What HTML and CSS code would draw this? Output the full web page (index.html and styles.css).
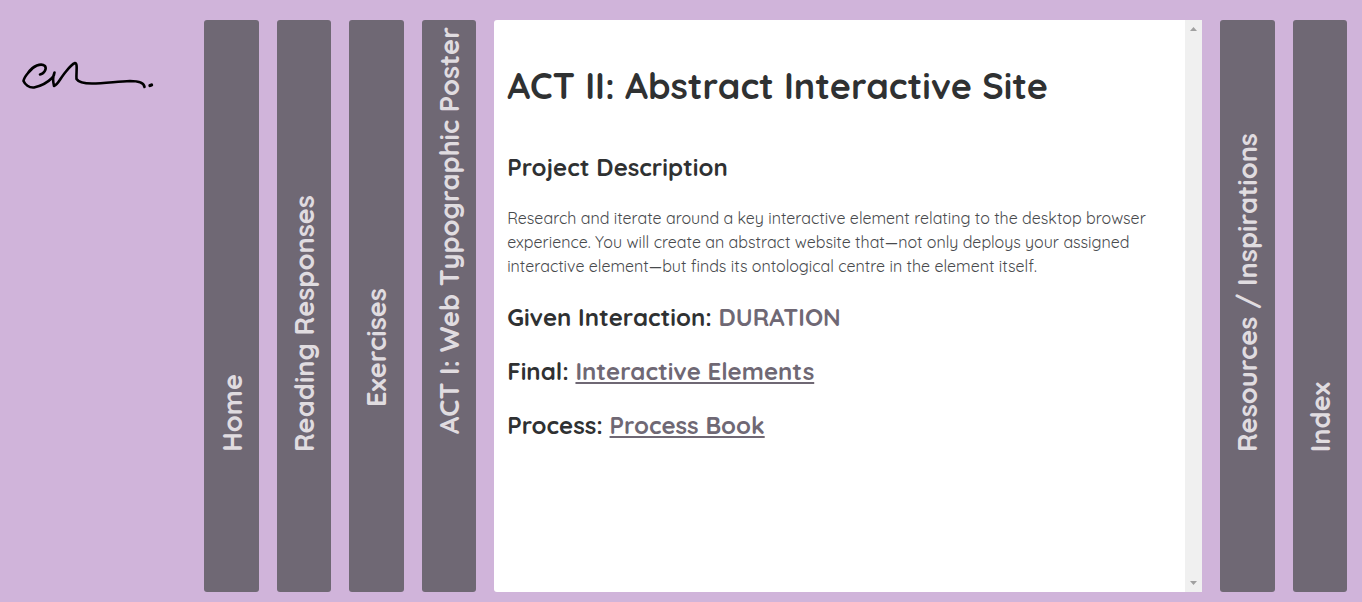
FILE: index.html
```html
<!DOCTYPE html>
<html lang="en">
<head>
<meta charset="utf-8">
<title>ACT II: Abstract Interactive Site</title>
<link rel="stylesheet" href="styles.css">
</head>
<body>
<div class="page">
  <header class="brand">
    <a class="brand-link" href="#home" aria-label="Home page">
      <svg class="signature" viewBox="0 0 140 40" width="140" height="40" aria-hidden="true">
        <path d="M20 19.500C24 19 27 14 25 11C21 7.500 13 11 8 18C5.500 21 4 23 3.500 26C5 29.500 9 33 14 32.500C21 31 28 27 32 23C34 21 34.500 19 34.500 17.500C33 21 33 27 34 31C38 29.500 40 24 44 19C48 14 51 9.500 55 8C58 8 56 18 56.500 24C59 28 65 28.500 72 28.500C84 28.500 97 26.500 110 26C118 26 124 27 124.500 32"/>
        <path class="signature-dot" d="M130 30.500L131.500 30"/>
      </svg>
    </a>
  </header>
  <nav class="tabs">
    <button class="tab" type="button"><span class="tab-label">Home</span></button>
    <button class="tab" type="button"><span class="tab-label">Reading Responses</span></button>
    <button class="tab tab-short" type="button"><span class="tab-label">Exercises</span></button>
    <button class="tab tab-long" type="button"><span class="tab-label">ACT I: Web Typographic Poster</span></button>
  </nav>
  <main class="panel">
    <article class="content">
      <h1 class="title">ACT II: Abstract Interactive Site</h1>
      <h2 class="subtitle">Project Description</h2>
      <p class="description">Research and iterate around a key interactive element relating to the desktop browser experience. You will create an abstract website that—not only deploys your assigned interactive element—but finds its ontological centre in the element itself.</p>
      <h2 class="subtitle">Given Interaction: <span class="accent">DURATION</span></h2>
      <h2 class="subtitle">Final: <a class="accent" href="#final">Interactive Elements</a></h2>
      <h2 class="subtitle">Process: <a class="accent" href="#process">Process Book</a></h2>
    </article>
    <div class="scroller">
      <button class="scroll-button" type="button" aria-label="Scroll up"><svg width="7" height="4" viewBox="0 0 7 4"><path d="M0 4L3.500 0L7 4Z"/></svg></button>
      <button class="scroll-button" type="button" aria-label="Scroll down"><svg width="7" height="4" viewBox="0 0 7 4"><path d="M0 0H7L3.500 4Z"/></svg></button>
    </div>
  </main>
  <nav class="tabs">
    <button class="tab" type="button"><span class="tab-label">Resources / Inspirations</span></button>
    <button class="tab" type="button"><span class="tab-label">Index</span></button>
  </nav>
</div>
</body>
</html>
```
FILE: styles.css
```css
* { box-sizing: border-box; }

body {
  margin: 0;
  background: #d0b4da;
  color: #2f3132;
  font-family: Quicksand, Lato, "Open Sans", sans-serif;
}

.page {
  display: grid;
  grid-template-columns: calc(15vw - 18px) auto 1fr auto;
  gap: 18px;
  min-height: 100vh;
  padding: 20px 15px 10px 0;
}

.brand { padding: 35px 0 0 20px; }
.brand-link { display: inline-block; }
.signature { display: block; }
.signature path {
  fill: none;
  stroke: #000;
  stroke-width: 2.6;
  stroke-linecap: round;
  stroke-linejoin: round;
}
.signature .signature-dot { stroke-width: 3.4; }

.tabs { display: flex; gap: 18px; }

.tab {
  display: flex;
  flex-direction: column;
  justify-content: flex-end;
  align-items: center;
  width: 4vw;
  padding: 0 0 140px;
  border: 0;
  border-radius: 3px;
  background: #6f6874;
  color: #e0dce0;
  font: 700 2vw/36px Quicksand, Lato, "Open Sans", sans-serif;
  cursor: pointer;
}
.tab-short { padding-bottom: 185px; }
.tab-long { padding-bottom: 158px; }

.tab-label {
  writing-mode: vertical-rl;
  transform: rotate(180deg);
  white-space: nowrap;
}

.panel {
  display: flex;
  min-width: 0;
  border-radius: 3px 0 0 3px;
  background: #fff;
}
.content { flex: 1; padding: 42px 13px 24px; }

.title { margin: 0 0 42px; font-size: 36px; line-height: 48px; }
.subtitle { margin: 0 0 24px; font-size: 24px; line-height: 30px; }
.description { margin: 0 0 24px; color: #484a4d; font-size: 16px; line-height: 24px; }
.accent { color: #6f6874; text-underline-offset: 2px; text-decoration-thickness: 2px; }

.scroller {
  display: flex;
  flex-direction: column;
  justify-content: space-between;
  width: 17px;
  background: #f0f0f0;
}
.scroll-button {
  display: grid;
  place-items: center;
  height: 18px;
  padding: 0;
  border: 0;
  background: none;
}
.scroll-button path { fill: #a0a0a0; }
```
